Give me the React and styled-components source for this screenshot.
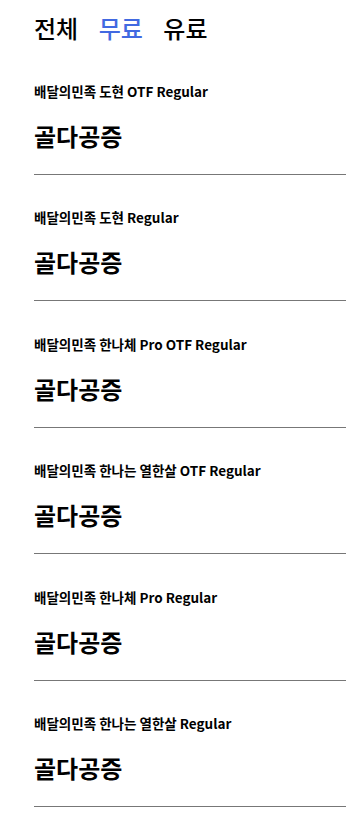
import React, { useState } from 'react';
import styled, { createGlobalStyle } from 'styled-components';

const GlobalStyle = createGlobalStyle`
  body {
    margin: 0;
    background: #fff;
    font-family: "Noto Sans CJK KR", "Noto Sans", sans-serif;
    color: #000;
  }
`;

const Page = styled.div`
  padding-left: 34px;
`;

const Tabs = styled.nav`
  display: flex;
  gap: 20.5px;
  padding-top: 12px;
  margin-bottom: 4.6px;
`;

const Tab = styled.button`
  border: 0;
  background: none;
  padding: 0;
  font-family: inherit;
  font-size: 24px;
  line-height: 32px;
  font-weight: 500;
  color: ${({ active }) => (active ? '#4169e1' : '#000')};
  cursor: pointer;
`;

const Item = styled.div`
  display: flex;
  flex-direction: column;
  padding: 33.4px 0 22px;
  border-bottom: 1px solid #777;
`;

const FontName = styled.h4`
  margin: 0;
  font-size: 13.5px;
  line-height: 18px;
  font-weight: 700;
`;

const Sample = styled.div`
  margin-top: 20px;
  font-size: 24px;
  line-height: 32px;
  font-weight: 700;
`;

const fonts = [
  '배달의민족 도현 OTF Regular',
  '배달의민족 도현 Regular',
  '배달의민족 한나체 Pro OTF Regular',
  '배달의민족 한나는 열한살 OTF Regular',
  '배달의민족 한나체 Pro Regular',
  '배달의민족 한나는 열한살 Regular',
];

const App = () => {
  const [tab, setTab] = useState('무료');

  return (
    <Page>
      <GlobalStyle />
      <Tabs>
        {['전체', '무료', '유료'].map((t) => (
          <Tab key={t} active={tab === t} onClick={() => setTab(t)}>
            {t}
          </Tab>
        ))}
      </Tabs>
      {fonts.map((name) => (
        <Item key={name}>
          <FontName>{name}</FontName>
          <Sample>골다공증</Sample>
        </Item>
      ))}
    </Page>
  );
};

export default App;
